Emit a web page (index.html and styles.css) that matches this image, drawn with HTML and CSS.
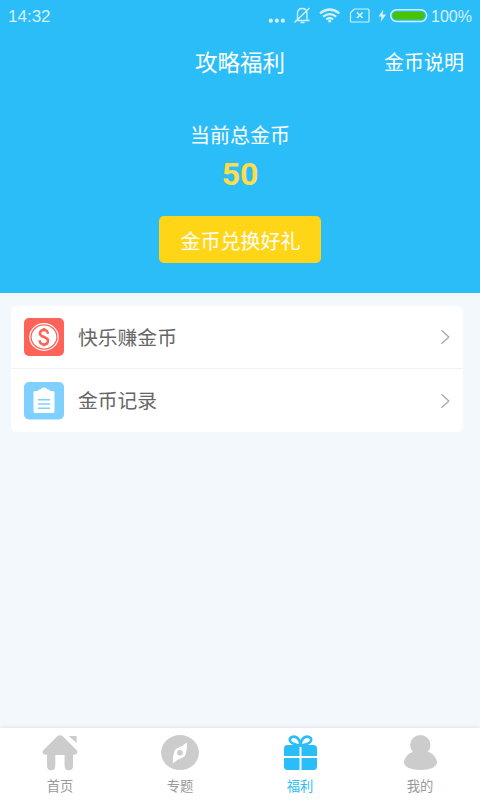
FILE: index.html
```
<!DOCTYPE html>
<html lang="zh-CN">
<head>
<meta charset="utf-8">
<title>攻略福利</title>
<link rel="stylesheet" href="styles.css">
</head>
<body>
<div class="app">
  <header class="hero">
    <div class="status">
      <span class="time">14:32</span>
      <svg class="status-icons" width="162" height="32" viewBox="268 0 162 32" fill="none" stroke="#d4f1fd">
        <g fill="#d4f1fd" stroke="none"><circle cx="270.800" cy="20.700" r="2.100"/><circle cx="276.800" cy="20.700" r="2.100"/><circle cx="282.800" cy="20.700" r="2.100"/></g>
        <path stroke-width="1.300" d="M295.500 20.500h14M297.500 20V13.500c0-3 1.800-5 4.700-5s4.800 2 4.800 5V20M300.500 22.500h4M309.500 8L294.500 22.500"/>
        <g stroke-width="2.200"><path d="M320 13.300q9.700-7.600 19.400 0M323.200 16.600q6.500-4.800 13 0M326.200 19.300q3.500-2.300 7 0"/></g>
        <circle cx="329.700" cy="21" r="1.600" fill="#d4f1fd" stroke="none"/>
        <path stroke-width="1.200" d="M354.300 9H368q1 0 1 1v11q0 1-1 1h-16.500q-1 0-1-1v-8.200z"/>
        <path stroke-width="1.700" d="M357 12.500l5.600 5.500M362.600 12.500L357 18"/>
        <path fill="#d4f1fd" stroke="none" d="M383.200 9.500L378.500 16.500H381.500L380.500 22L386.200 14.500H382.700z"/>
        <rect x="390.700" y="9.700" width="36" height="11.800" rx="5.900" stroke-width="1.500"/>
        <rect x="392.700" y="11.700" width="32" height="7.800" rx="3.900" fill="#48c300" stroke="none"/>
      </svg>
      <span class="percent">100%</span>
    </div>
    <nav class="titlebar">
      <h1>攻略福利</h1>
      <a class="help">金币说明</a>
    </nav>
    <div class="label">当前总金币</div>
    <div class="amount">50</div>
    <button class="redeem">金币兑换好礼</button>
  </header>
  <main class="content">
    <section class="card">
      <a class="row">
        <svg class="badge" width="40" height="38" viewBox="0 0 40 38">
          <rect width="40" height="38" rx="5" fill="#ff6259"/>
          <ellipse cx="20" cy="19" rx="14.200" ry="13.300" fill="none" stroke="#fff" stroke-width="1.200"/>
          <ellipse cx="20" cy="19" rx="12.300" ry="11.400" fill="#fff"/>
          <path d="M23.800 15.800c0-2.500-1.500-3.900-3.900-3.900s-3.900 1.400-3.900 3.500c0 4.600 8 2.700 8 7.300c0 2.200-1.600 3.700-4.100 3.700s-4.200-1.500-4.200-4.200M20 10v2M20 26v2.300" fill="none" stroke="#ff6259" stroke-width="2.500"/>
        </svg>
        <span class="row-text">快乐赚金币</span>
        <svg class="chevron" width="9" height="16" viewBox="0 0 9 16"><path d="M.5 1.200L7.800 8L.5 14.800"/></svg>
      </a>
      <a class="row">
        <svg class="badge" width="40" height="38" viewBox="0 0 40 38">
          <rect width="40" height="37.500" rx="5" fill="#7fd0ff"/>
          <path fill="#fff" d="M10.500 9h3.500q0-1.500 3-2Q17.500 5.500 20 5.500T23 7q3 .5 3 2h3q1.500 0 1.500 1.500v19q0 1.500-1.500 1.500H11q-1.500 0-1.500-1.500v-19q0-1.500 1-1.500z"/>
          <path d="M14.500 17.800h11M14.500 22h11M14.500 26.300h11" stroke="#7fd0ff" stroke-width="1.500" stroke-linecap="round"/>
        </svg>
        <span class="row-text">金币记录</span>
        <svg class="chevron" width="9" height="16" viewBox="0 0 9 16"><path d="M.5 1.200L7.800 8L.5 14.800"/></svg>
      </a>
    </section>
  </main>
  <footer class="tabs">
    <a class="tab">
      <svg width="40" height="36" viewBox="0 0 40 36" fill="currentColor"><path d="M17 1.500q3-2.500 6 0L36.500 15q1.500 2 .2 3.800q-.8 1-2.700 1H33V31q0 4.200-4.200 4.200T24.600 31V20h-9.300v11q0 4.200-4.100 4.200T7.100 31V19.800H5.500q-2 0-2.600-1.600q-.7-1.700.7-3.200z"/><path d="M28.700 1h7q1 0 1 1v6z"/></svg>
      <span>首页</span>
    </a>
    <a class="tab">
      <svg width="40" height="36" viewBox="0 0 40 36"><ellipse cx="20" cy="17.600" rx="18.900" ry="17.500" fill="currentColor"/><path fill="#fff" d="M27 7.800q.3 6.700-1.500 12.200q-1 2-3.400 2.700Q17.500 24 13.500 28q-.8 0-.7-1q-.3-5.500 1.700-11q1-2.300 3.600-3.200Q22.500 11.500 26 8z"/><ellipse cx="20" cy="17.800" rx="2.900" ry="2.700" fill="currentColor"/></svg>
      <span>专题</span>
    </a>
    <a class="tab active">
      <svg width="40" height="36" viewBox="0 0 40 36"><path fill="currentColor" d="M4 13.500q0-3.500 3.500-3.500H19.500v11H4zM21.500 10h12q3.500 0 3.500 3.500V21H21.500zM4 23h15.500v12H7.500Q4 35 4 31.500zM21.500 23H37v8.500q0 3.500-3.500 3.500h-12z"/><path fill="none" stroke="currentColor" stroke-width="2.700" d="M20.500 10.500C15 9.800 10 8 9.800 5C9.700 2 13.500 .9 16.200 2.200Q20 4.500 20.500 10.500C26 9.800 31 8 31.200 5C31.300 2 27.500 .9 24.800 2.200Q21 4.500 20.500 10.500z"/></svg>
      <span>福利</span>
    </a>
    <a class="tab">
      <svg width="40" height="36" viewBox="0 0 40 36" fill="currentColor"><ellipse cx="20.300" cy="10" rx="10.200" ry="9.900"/><path d="M14 16.500h13C33 18 37 23.500 37 27.500C37 32 30 35 20.500 35S4 32 4 27.500C4 23.500 8 18 14 16.500z"/></svg>
      <span>我的</span>
    </a>
  </footer>
</div>
</body>
</html>
```
FILE: styles.css
```
* {
  box-sizing: border-box;
}

body {
  margin: 0;
  font-family: "Noto Sans CJK SC", sans-serif;
}

.app {
  width: 480px;
  height: 800px;
  display: flex;
  flex-direction: column;
  background: #f3f8fd;
  overflow: hidden;
}

.hero {
  height: 293px;
  background: #2bbdf7;
  color: #fff;
  display: flex;
  flex-direction: column;
  align-items: center;
}

.status {
  width: 100%;
  height: 32px;
  padding: 0 7px;
  display: flex;
  align-items: center;
  color: #d4f1fd;
  font-family: "Liberation Sans", sans-serif;
  font-size: 17px;
}

.time {
  padding: 1px 0 0 1px;
}

.status-icons {
  margin-left: auto;
}

.percent {
  width: 43px;
  padding: 1px 0 0 1px;
  font-size: 16px;
  white-space: nowrap;
}

.titlebar {
  width: 100%;
  height: 58px;
  padding: 0 16px;
  display: grid;
  grid-template-columns: 1fr auto 1fr;
  align-items: center;
}

.titlebar h1 {
  grid-column: 2;
  margin: 0;
  font-size: 22.5px;
  font-weight: 400;
}

.help {
  justify-self: end;
  font-size: 20px;
}

.label {
  margin-top: 30px;
  font-size: 20px;
  line-height: 30px;
}

.amount {
  margin-top: 5px;
  height: 38px;
  font: 700 32px/38px Roboto, sans-serif;
  color: #ffdc4b;
}

.redeem {
  margin-top: 23px;
  width: 162px;
  height: 47px;
  padding: 2px 0 0 1px;
  border: 0;
  border-radius: 5px;
  background: #ffd517;
  color: #fff;
  font: 400 20px "Noto Sans CJK SC", sans-serif;
}

.content {
  flex: 1;
  padding: 13px 17px 0 11px;
}

.card {
  height: 126px;
  border-radius: 6px;
  background: #fff;
}

.row {
  height: 62px;
  padding: 0 13px;
  display: flex;
  align-items: center;
}

.row + .row {
  height: 64px;
  border-top: 1px solid #eef4f8;
}

.row-text {
  margin-left: 14px;
  padding-bottom: 2px;
  font-size: 19.8px;
  color: #666;
}

.chevron {
  margin-left: auto;
  fill: none;
  stroke: #aaa;
  stroke-width: 1.4;
}

.tabs {
  height: 72px;
  padding-top: 7px;
  background: #fff;
  box-shadow: 0 -1px 3px #dfe6eb;
  display: grid;
  grid-template-columns: repeat(4, 1fr);
}

.tab {
  display: flex;
  flex-direction: column;
  align-items: center;
  color: #ccc;
}

.tab span {
  margin-top: 5px;
  font-size: 13.3px;
  line-height: 20px;
  color: #999;
}

.active,
.active span {
  color: #2bbdf7;
}
```
